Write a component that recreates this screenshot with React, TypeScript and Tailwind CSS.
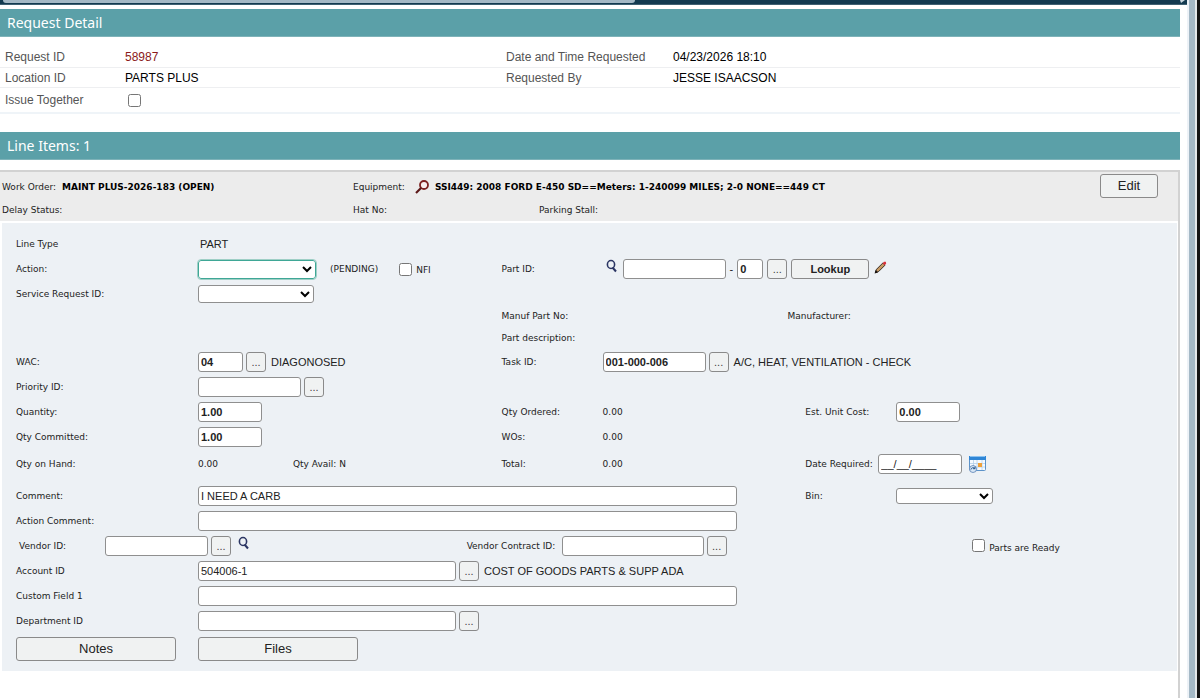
import type { ComponentProps, ReactNode } from "react";

const formRow = "grid grid-cols-[182px_304fr_101px_203fr_91px_281fr] items-center";
const fieldBox =
  "h-5 rounded-[3px] border border-[#8f8f8f] bg-white px-[2px] font-['Liberation_Sans',sans-serif] text-[11px] text-[#222]";

export default function App() {
  return (
    <div className="flex min-h-screen bg-white font-['DejaVu_Sans',sans-serif] text-[9px] leading-3 text-[#222]">
      <div className="flex min-w-0 flex-1 flex-col">
        <TopScrollBar />
        <main className="mr-[7px] flex flex-1 flex-col pt-1">
          <SectionTitle>Request Detail</SectionTitle>
          <RequestDetail />
          <SectionTitle>Line Items: 1</SectionTitle>
          <section className="mt-[10px] flex-1 border-t-2 border-r-2 border-[#d2d2d2]">
            <WorkOrderHeader />
            <LineItemForm />
          </section>
        </main>
      </div>
      <div className="flex w-[13px] shrink-0">
        <div className="w-[2px] bg-[#edf2f7]" />
        <div className="w-[6px] bg-[#a5b9c6]" />
        <div className="w-[2px] bg-[#e4e8ea]" />
        <div className="w-[3px] bg-[#151515]" />
      </div>
    </div>
  );
}

function TopScrollBar() {
  return (
    <div className="flex h-[5px] items-start justify-between border-b border-[#3f6072] bg-[#123a50] pl-[3px]">
      <div className="h-[3px] w-[53.4%] rounded-b-sm bg-[#a3b8c5]" />
      <svg width="7" height="4" viewBox="0 0 7 4" aria-hidden="true">
        <path d="M0 0h5L1 3z" fill="#c9d6de" />
      </svg>
    </div>
  );
}

function SectionTitle({ children }: { children: ReactNode }) {
  return (
    <h2 className="h-7 border-b border-[#7fb3b9] bg-[#5ba0a8] px-[7px] font-['Noto_Sans',sans-serif] text-sm leading-[27px] text-white">
      {children}
    </h2>
  );
}

function RequestDetail() {
  const row = "grid grid-cols-[120px_381fr_167px_507fr] items-center border-b border-[#eeeff1] pl-[5px]";

  return (
    <section className="mb-[18px] pt-[9px] font-['Liberation_Sans',sans-serif] text-xs text-[#555]">
      <div className={`${row} h-[22px]`}>
        <span>Request ID</span>
        <span className="text-[#8b1a1a]">58987</span>
        <span>Date and Time Requested</span>
        <span className="text-black">04/23/2026 18:10</span>
      </div>
      <div className={`${row} h-5`}>
        <span>Location ID</span>
        <span className="text-black">PARTS PLUS</span>
        <span>Requested By</span>
        <span className="text-black">JESSE ISAACSON</span>
      </div>
      <div className="grid h-[26px] grid-cols-[120px_1fr] items-center border-b-2 border-[#eff4f8] pl-[5px]">
        <label htmlFor="issueTogether">Issue Together</label>
        <input id="issueTogether" type="checkbox" className="ml-[3px] size-[13px]" />
      </div>
    </section>
  );
}

function WorkOrderHeader() {
  return (
    <div className="flex h-[49px] items-start bg-[#ececec] pt-[2px] pr-5 pl-[2px]">
      <div className="min-w-0 flex-1">
        <div className="grid h-[26px] grid-cols-[351px_1fr] items-center">
          <div>
            Work Order: <b className="ml-[3px] text-black">MAINT PLUS-2026-183 (OPEN)</b>
          </div>
          <div className="flex items-center">
            Equipment:
            <EquipmentSearchIcon />
            <b className="text-black">SSI449: 2008 FORD E-450 SD==Meters: 1-240099 MILES; 2-0 NONE==449 CT</b>
          </div>
        </div>
        <div className="grid h-5 grid-cols-[351px_186px_1fr] items-center">
          <span>Delay Status:</span>
          <span>Hat No:</span>
          <span>Parking Stall:</span>
        </div>
      </div>
      <Button className="h-6 w-[58px] text-[13px]">Edit</Button>
    </div>
  );
}

function LineItemForm() {
  return (
    <form className="mt-[2px] mr-px ml-[2px] bg-[#edf1f5] pt-[9px] pb-[10px] pl-[14px]">
      <div className={`${formRow} h-6`}>
        <span>Line Type</span>
        <span className="pl-[2px] font-['Liberation_Sans',sans-serif] text-[11px]">PART</span>
      </div>

      <div className={`${formRow} h-[26px]`}>
        <label htmlFor="action">Action:</label>
        <div className="flex items-center">
          <Select id="action" className="h-[19px] w-[118px] border-[#3fa796] outline outline-[#9fcfc6]" />
          <span className="mr-[21px] ml-[14px]">(PENDING)</span>
          <input id="nfi" type="checkbox" className="size-[13px]" />
          <label htmlFor="nfi" className="ml-1 pt-[2px]">
            NFI
          </label>
        </div>
        <label htmlFor="partId">Part ID:</label>
        <div className="col-span-3 flex items-center pl-[3px]">
          <SearchIcon />
          <TextField id="partId" className="ml-[5px] w-[103px]" />
          <span className="mx-1 font-['Liberation_Sans',sans-serif] text-[11px]">-</span>
          <TextField aria-label="Part suffix" defaultValue="0" className="mr-px w-[26px] font-bold" />
          <MoreButton label="Browse parts" />
          <Button className="mr-[5px] ml-1 h-5 w-[78px] text-[11px] font-bold">Lookup</Button>
          <PencilIcon />
        </div>
      </div>

      <div className={`${formRow} h-6`}>
        <label htmlFor="serviceRequest">Service Request ID:</label>
        <Select id="serviceRequest" className="h-[18px] w-[116px] border-[#8f8f8f]" />
      </div>

      <div className="grid h-5 grid-cols-[182px_304fr_286px_390fr] items-center">
        <span className="col-start-3">Manuf Part No:</span>
        <span>Manufacturer:</span>
      </div>
      <div className={`${formRow} h-[23px]`}>
        <span className="col-start-3 whitespace-nowrap">Part description:</span>
      </div>

      <div className={`${formRow} h-[25px]`}>
        <label htmlFor="wac">WAC:</label>
        <div className="flex items-center">
          <TextField id="wac" defaultValue="04" className="w-[45px] font-bold" />
          <MoreButton label="Browse WAC" />
          <Description>DIAGONOSED</Description>
        </div>
        <label htmlFor="taskId">Task ID:</label>
        <div className="col-span-3 flex items-center">
          <TextField id="taskId" defaultValue="001-000-006" className="w-[103px] font-bold" />
          <MoreButton label="Browse tasks" />
          <Description>A/C, HEAT, VENTILATION - CHECK</Description>
        </div>
      </div>

      <div className={`${formRow} h-[25px]`}>
        <label htmlFor="priority">Priority ID:</label>
        <div className="flex items-center">
          <TextField id="priority" className="w-[103px]" />
          <MoreButton label="Browse priorities" />
        </div>
      </div>

      <div className={`${formRow} h-[25px]`}>
        <label htmlFor="quantity">Quantity:</label>
        <TextField id="quantity" defaultValue="1.00" className="w-16 font-bold" />
        <span>Qty Ordered:</span>
        <span>0.00</span>
        <label htmlFor="unitCost">Est. Unit Cost:</label>
        <TextField id="unitCost" defaultValue="0.00" className="w-16 font-bold" />
      </div>

      <div className={`${formRow} h-[25px]`}>
        <label htmlFor="committed">Qty Committed:</label>
        <TextField id="committed" defaultValue="1.00" className="w-16 font-bold" />
        <span>WOs:</span>
        <span>0.00</span>
      </div>

      <div className={`${formRow} mb-[5px] h-[29px]`}>
        <span>Qty on Hand:</span>
        <div className="grid grid-cols-[95px_1fr]">
          <span>0.00</span>
          <span>Qty Avail: N</span>
        </div>
        <span>Total:</span>
        <span>0.00</span>
        <div className="col-span-2 flex items-center">
          <label htmlFor="dateRequired" className="w-[73px] whitespace-nowrap">
            Date Required:
          </label>
          <TextField id="dateRequired" defaultValue="__/__/____" className="mr-[6px] w-[84px]" />
          <CalendarIcon />
        </div>
      </div>

      <div className={`${formRow} h-[25px]`}>
        <label htmlFor="comment">Comment:</label>
        <div className="col-span-3 pr-[68px]">
          <TextField id="comment" defaultValue="I NEED A CARB" className="w-full" />
        </div>
        <label htmlFor="bin">Bin:</label>
        <Select id="bin" className="h-4 w-[97px] border-[#8f8f8f]" />
      </div>

      <div className={`${formRow} h-[25px]`}>
        <label htmlFor="actionComment">Action Comment:</label>
        <div className="col-span-3 pr-[68px]">
          <TextField id="actionComment" className="w-full" />
        </div>
      </div>

      <div className="grid h-[25px] grid-cols-[89px_362fr_95px_411fr_205fr] items-center">
        <label htmlFor="vendor" className="pl-[3px]">
          Vendor ID:
        </label>
        <div className="flex items-center">
          <TextField id="vendor" className="w-[103px]" />
          <MoreButton label="Browse vendors" />
          <span className="ml-[7px]">
            <SearchIcon />
          </span>
        </div>
        <label htmlFor="contract" className="whitespace-nowrap">
          Vendor Contract ID:
        </label>
        <div className="flex items-center">
          <TextField id="contract" className="w-[142px]" />
          <MoreButton label="Browse vendor contracts" />
        </div>
        <div className="flex items-center">
          <input id="partsReady" type="checkbox" className="size-[13px]" />
          <label htmlFor="partsReady" className="ml-1 pt-1">
            Parts are Ready
          </label>
        </div>
      </div>

      <div className={`${formRow} h-[25px]`}>
        <label htmlFor="account">Account ID</label>
        <div className="col-span-5 flex items-center">
          <TextField id="account" defaultValue="504006-1" className="w-[258px]" />
          <MoreButton label="Browse accounts" />
          <Description>COST OF GOODS PARTS &amp; SUPP ADA</Description>
        </div>
      </div>

      <div className={`${formRow} h-[25px]`}>
        <label htmlFor="custom1">Custom Field 1</label>
        <div className="col-span-3 pr-[68px]">
          <TextField id="custom1" className="w-full" />
        </div>
      </div>

      <div className={`${formRow} h-[25px]`}>
        <label htmlFor="department">Department ID</label>
        <div className="col-span-5 flex items-center">
          <TextField id="department" className="w-[258px]" />
          <MoreButton label="Browse departments" />
        </div>
      </div>

      <div className="mt-1 flex gap-[22px]">
        <Button className="h-6 w-40 text-[13px]">Notes</Button>
        <Button className="h-6 w-40 text-[13px]">Files</Button>
      </div>
    </form>
  );
}

function TextField({ className = "", ...props }: ComponentProps<"input">) {
  return <input type="text" className={`${fieldBox} ${className}`} {...props} />;
}

function Select({ id, className }: { id: string; className: string }) {
  return (
    <select
      id={id}
      className={`rounded-[3px] border bg-white font-['Liberation_Sans',sans-serif] text-[11px] text-black ${className}`}
    >
      <option value=""></option>
    </select>
  );
}

function Button({ className, children }: { className: string; children: ReactNode }) {
  return (
    <button
      type="button"
      className={`shrink-0 rounded-[3px] border border-[#8a8a8a] bg-[#f0f2f2] font-['Liberation_Sans',sans-serif] text-[#222] ${className}`}
    >
      {children}
    </button>
  );
}

function MoreButton({ label }: { label: string }) {
  return (
    <button
      type="button"
      aria-label={label}
      className="ml-[3px] size-5 shrink-0 rounded-[3px] border border-[#8a8a8a] bg-[#f0f2f2] font-['Liberation_Sans',sans-serif] text-[11px] text-[#444]"
    >
      ...
    </button>
  );
}

function Description({ children }: { children: ReactNode }) {
  return <span className="ml-[5px] font-['Liberation_Sans',sans-serif] text-[11px]">{children}</span>;
}

function SearchIcon() {
  return (
    <svg width="12" height="20" viewBox="0 0 12 20" fill="none" stroke="#2b3563" aria-hidden="true">
      <ellipse cx="5" cy="5.5" rx="3.6" ry="4" strokeWidth="1.6" />
      <path d="M6.5 8.5l3.5 4" strokeWidth="2" />
    </svg>
  );
}

function EquipmentSearchIcon() {
  return (
    <svg className="mr-[5px] ml-[10px]" width="15" height="14" viewBox="0 0 15 14" fill="none" aria-hidden="true">
      <circle cx="9" cy="5" r="4" fill="#f8eeee" stroke="#7c2020" strokeWidth="1.8" />
      <path d="M6 8l-5 5" stroke="#5b1717" strokeWidth="2.2" />
    </svg>
  );
}

function PencilIcon() {
  return (
    <svg className="mb-1" width="13" height="13" viewBox="0 0 13 13" aria-hidden="true">
      <path d="M1.5 11.5l1-3.2L8.8 2l2.2 2.2-6.3 6.3z" fill="#c79a62" stroke="#2a211c" strokeWidth=".9" />
      <path d="M8.6 2.2L10 .8h1.8l.4 1.8-1.4 1.6z" fill="#d8323c" />
      <path d="M.6 12.4l1-3.4 2.4 2.4z" fill="#16110e" />
    </svg>
  );
}

function CalendarIcon() {
  return (
    <svg width="19" height="18" viewBox="0 0 19 18" aria-hidden="true">
      <rect x="1.5" y="1.5" width="16" height="14" rx="1" fill="#f5faff" stroke="#5d93c9" />
      <path d="M1 1h17v4H1z" fill="#2f86d6" />
      <path d="M2 1.5h15" stroke="#8cc2f0" />
      <path d="M2 8.5h15M2 12h15M5.5 5v10M9 5v10M14 5v10" stroke="#b5d0ea" strokeWidth=".8" />
      <rect x="10" y="8" width="4" height="4" fill="#f0a13a" />
      <circle cx="5" cy="14" r="3.5" fill="#d7e6f5" stroke="#5a82b4" strokeWidth=".8" />
      <path d="M3 14.5c.4-2 2.6-2.4 4-1M7 11.7v2H5" fill="none" stroke="#29598f" />
    </svg>
  );
}
